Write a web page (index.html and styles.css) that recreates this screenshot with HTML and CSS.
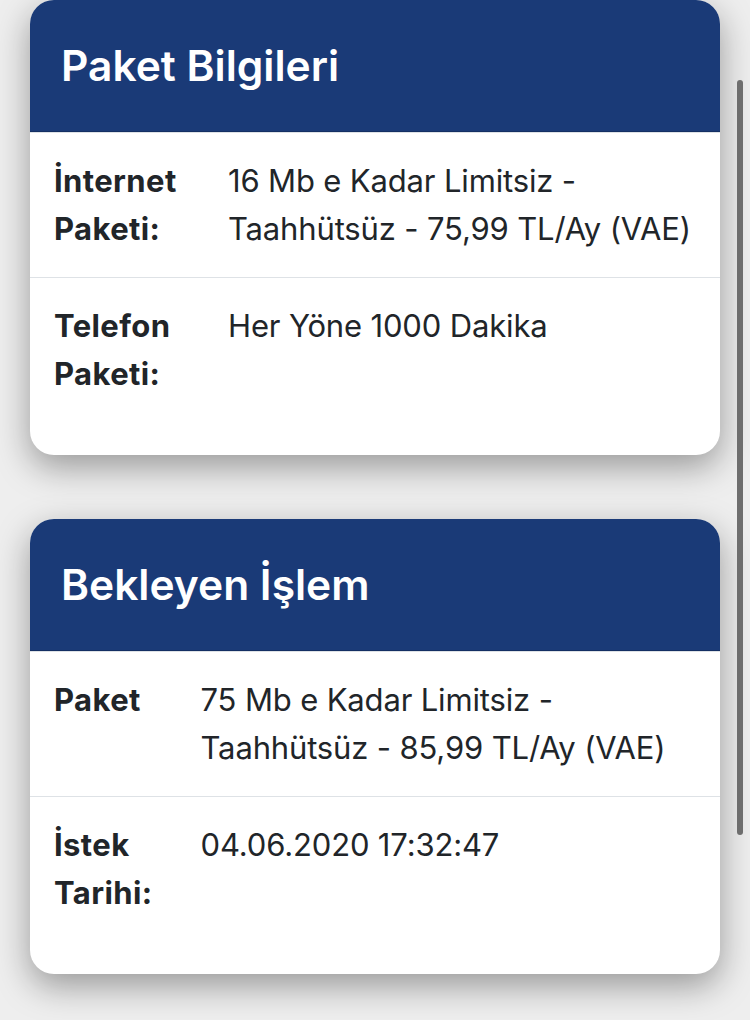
FILE: index.html
```html
<!DOCTYPE html>
<html lang="tr">
  <head>
    <title>Paket Bilgileri</title>
    <meta charset="utf-8" />
    <meta name="viewport" content="width=device-width, initial-scale=1" />
    <link rel="stylesheet" href="styles.css">
  </head>
  <body>
    <div class="page">
      <!-- current package -->
      <div class="card card-package">
        <div class="card-header">
          <h1>Paket Bilgileri</h1>
        </div>
        <table class="info-table">
          <tr>
            <td class="label">İnternet Paketi:</td>
            <td class="value">16 Mb e Kadar Limitsiz - Taahhütsüz - 75,99 TL/Ay (VAE)</td>
          </tr>
          <tr>
            <td class="label">Telefon Paketi:</td>
            <td class="value">Her Yöne 1000 Dakika</td>
          </tr>
        </table>
      </div>

      <!-- pending request -->
      <div class="card card-pending">
        <div class="card-header">
          <h1>Bekleyen İşlem</h1>
        </div>
        <table class="info-table">
          <tr>
            <td class="label">Paket</td>
            <td class="value">75 Mb e Kadar Limitsiz - Taahhütsüz - 85,99 TL/Ay (VAE)</td>
          </tr>
          <tr>
            <td class="label">İstek Tarihi:</td>
            <td class="value">04.06.2020 17:32:47</td>
          </tr>
        </table>
      </div>
    </div>
    <div class="scrollbar"></div>
  </body>
</html>
```

FILE: styles.css
```css
body {
  margin: 0;
  background: #eeeeee;
  color: #212529;
  font-family: Inter, "Noto Sans", "Liberation Sans", sans-serif;
  overflow: hidden;
}

.page {
  padding: 0 30px;
}

.card {
  background: #fff;
  border-radius: 24px;
  overflow: hidden;
  margin-bottom: 64px;
  box-shadow: 0 12px 34px rgba(0, 0, 0, 0.36);
}

.card-header {
  background: #1a3a77;
  border-bottom: 1px solid #142f63;
  padding: 40px 31px;
}

.card-header h1 {
  margin: 0;
  color: #fff;
  font-size: 42.5px;
  line-height: 51px;
  font-weight: 600;
}

.info-table {
  width: 100%;
  border-collapse: collapse;
  margin-bottom: 33px;
  font-size: 31px;
  line-height: 48px;
}

.info-table td {
  padding: 24px;
  vertical-align: top;
  border-top: 1px solid #dee2e6;
}

.info-table .label {
  font-weight: 700;
  letter-spacing: 0.4px;
  width: 126px;
}

.card-pending .info-table .label {
  width: 98px;
}

.info-table .value {
  font-weight: 400;
  letter-spacing: -0.15px;
}

.scrollbar {
  position: fixed;
  top: 80px;
  right: 7px;
  width: 6px;
  height: 755px;
  border-radius: 3px;
  background: #6e6e6e;
}
```
